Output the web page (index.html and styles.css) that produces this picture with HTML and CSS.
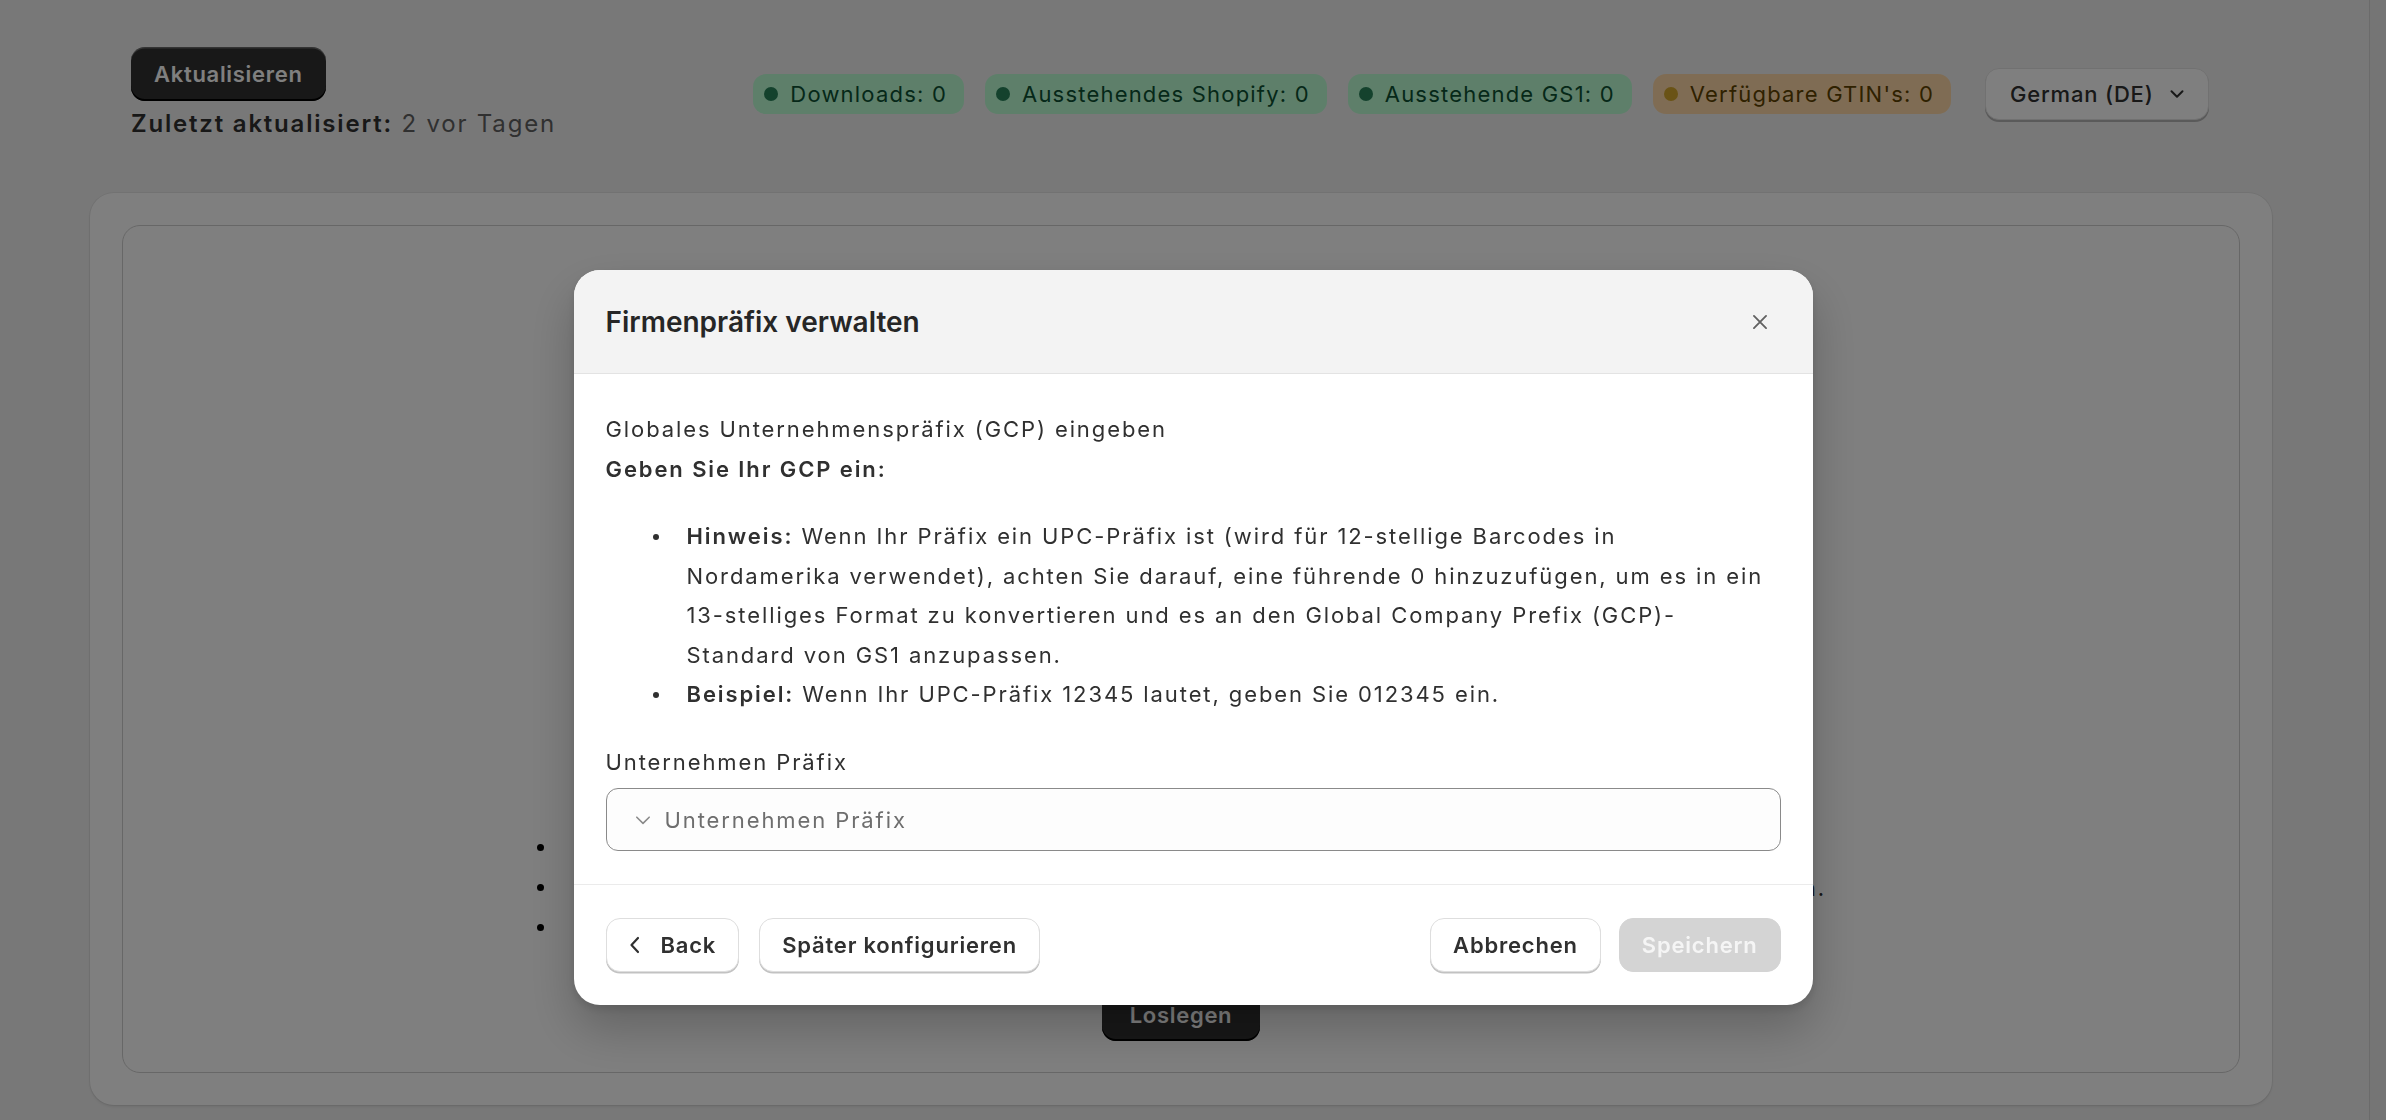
FILE: index.html
```html
<!DOCTYPE html>
<html lang="de">
<head>
<meta charset="utf-8">
<title>Firmenpräfix verwalten</title>
<link rel="stylesheet" href="styles.css">
</head>
<body>
<div class="app">
  <main class="main">
    <header class="topbar">
      <div class="refresh">
        <button class="btn-dark" type="button">Aktualisieren</button>
        <p class="updated"><strong>Zuletzt aktualisiert:</strong> 2 vor Tagen</p>
      </div>
      <div class="status">
        <span class="badge badge-success"><span class="dot"></span>Downloads: 0</span>
        <span class="badge badge-success"><span class="dot"></span>Ausstehendes Shopify: 0</span>
        <span class="badge badge-success"><span class="dot"></span>Ausstehende GS1: 0</span>
        <span class="badge badge-attention"><span class="dot"></span>Verfügbare GTIN's: 0</span>
        <button class="select" type="button">German (DE)
          <svg class="select-chevron" viewBox="0 0 20 20" aria-hidden="true"><path d="M5 7.5l5 5 5-5" fill="none" stroke="currentColor" stroke-width="1.8" stroke-linecap="round" stroke-linejoin="round"/></svg>
        </button>
      </div>
    </header>

    <section class="card">
      <div class="card-inner">
        <ul class="bg-list">
          <li>Verbinden Sie Ihr GS1-Konto.</li>
          <li class="long">Weisen Sie Ihren Produkten GTINs zu und laden Sie die Barcodes herunterladen.</li>
          <li>Synchronisieren Sie die Daten.</li>
        </ul>
        <button class="btn-dark btn-start" type="button">Loslegen</button>
      </div>
    </section>
  </main>
  <div class="scrollbar"></div>
</div>

<div class="backdrop"></div>

<div class="modal-layer">
  <div class="modal" role="dialog" aria-labelledby="modal-title">
    <div class="modal-header">
      <h2 class="modal-title" id="modal-title">Firmenpräfix verwalten</h2>
      <button class="close" type="button" aria-label="Schließen">
        <svg viewBox="0 0 20 20" aria-hidden="true"><path d="M4.5 4.5l11 11M15.5 4.5l-11 11" fill="none" stroke="currentColor" stroke-width="1.7" stroke-linecap="round"/></svg>
      </button>
    </div>
    <div class="modal-body">
      <p>Globales Unternehmenspräfix (GCP) eingeben</p>
      <p><strong>Geben Sie Ihr GCP ein:</strong></p>
      <ul class="hint-list">
        <li><strong>Hinweis:</strong> Wenn Ihr Präfix ein UPC-Präfix ist (wird für 12-stellige Barcodes in Nordamerika verwendet), achten Sie darauf, eine führende 0 hinzuzufügen, um es in ein 13-stelliges Format zu konvertieren und es an den Global Company Prefix (GCP)-Standard von GS1 anzupassen.</li>
        <li><strong>Beispiel:</strong> Wenn Ihr UPC-Präfix 12345 lautet, geben Sie 012345 ein.</li>
      </ul>
      <label class="field-label" for="prefix">Unternehmen Präfix</label>
      <div class="combo">
        <svg class="combo-chevron" viewBox="0 0 16 16" aria-hidden="true"><path d="M2.5 5.5L8 11l5.5-5.5" fill="none" stroke="currentColor" stroke-width="1.4" stroke-linecap="round" stroke-linejoin="round"/></svg>
        <input id="prefix" class="combo-input" type="text" placeholder="Unternehmen Präfix">
      </div>
    </div>
    <div class="modal-footer">
      <div class="btn-group">
        <button class="btn" type="button">
          <svg class="back-chevron" viewBox="0 0 12 20" aria-hidden="true"><path d="M9 3L2.5 10 9 17" fill="none" stroke="currentColor" stroke-width="2.2" stroke-linecap="round" stroke-linejoin="round"/></svg>
          Back
        </button>
        <button class="btn" type="button">Später konfigurieren</button>
      </div>
      <div class="btn-group btn-group-right">
        <button class="btn" type="button">Abbrechen</button>
        <button class="btn btn-disabled" type="button" disabled>Speichern</button>
      </div>
    </div>
  </div>
</div>
</body>
</html>
```

FILE: styles.css
```css
* { box-sizing: border-box; }

html, body {
  margin: 0;
  height: 100%;
}

body {
  font-family: Inter, "Liberation Sans", sans-serif;
  color: #303030;
  background: #f1f1f1;
  overflow: hidden;
}

.app {
  display: flex;
  height: 1120px;
}

.main {
  flex: 1;
  min-width: 0;
}

.scrollbar {
  width: 17px;
  background: #ebebeb;
  border-left: 1px solid #d6d6d6;
}

/* top bar */
.topbar {
  display: flex;
  justify-content: space-between;
  align-items: flex-start;
  padding: 47px 160px 0 131px;
}

.btn-dark {
  font-family: inherit;
  font-size: 22px;
  font-weight: 600;
  letter-spacing: 0.7px;
  color: #fff;
  background: #303030;
  border: 0;
  border-radius: 14px;
  height: 54px;
  padding: 0 23px;
  box-shadow: inset 0 -2px 0 #000, inset 0 1.5px 0 rgba(255, 255, 255, 0.28);
}

.updated {
  margin: 4px 0 0;
  font-size: 24px;
  letter-spacing: 1.8px;
  line-height: 38px;
  color: #616161;
}

.updated strong {
  color: #303030;
  font-weight: 600;
}

.status {
  display: flex;
  align-items: center;
  gap: 21px;
  margin-top: 21px;
}

.badge {
  display: flex;
  align-items: center;
  gap: 12px;
  height: 40px;
  padding: 0 17px 0 11px;
  border-radius: 13px;
  font-size: 22px;
  letter-spacing: 1.2px;
  white-space: nowrap;
}

.dot {
  width: 14px;
  height: 14px;
  border-radius: 50%;
}

.badge-success {
  background: #bcfed5;
  color: #0c5132;
}

.badge-success .dot { background: #29845a; }

.badge-attention {
  background: #ffd9a8;
  color: #5e4200;
}

.badge-attention .dot { background: #d4a72c; }

.select {
  margin-left: 13px;
  width: 224px;
  height: 52px;
  padding: 0 20px 0 24px;
  display: flex;
  align-items: center;
  justify-content: space-between;
  font-family: inherit;
  font-size: 22px;
  font-weight: 500;
  letter-spacing: 0.8px;
  color: #303030;
  background: #fff;
  border: 1px solid #e3e3e3;
  border-radius: 14px;
  box-shadow: 0 2px 0 #b5b5b5;
}

.select-chevron {
  width: 22px;
  height: 22px;
}

/* background card */
.card {
  margin: 50px 97px 0 90px;
  padding: 32px;
  background: #fff;
  border-radius: 24px;
  box-shadow: 0 0 0 1px rgba(0, 0, 0, 0.05), 0 2px 3px rgba(0, 0, 0, 0.08);
}

.card-inner {
  height: 848px;
  border: 1px solid #cfcfcf;
  border-radius: 18px;
  display: flex;
  flex-direction: column;
  align-items: center;
  justify-content: flex-end;
  padding-bottom: 31px;
}

.bg-list {
  list-style: none;
  margin: 0 0 41px;
  padding: 0 0 0 41px;
  width: 1290px;
  font-size: 22px;
  letter-spacing: 1.9px;
  line-height: 40px;
  color: #303030;
  white-space: nowrap;
}

.bg-list li { position: relative; }

.bg-list li::before {
  content: "";
  position: absolute;
  left: -40px;
  top: 16px;
  width: 7px;
  height: 7px;
  border-radius: 50%;
  background: #000;
}

.bg-list li.long { text-align: right; }

.btn-start {
  height: 52px;
  min-width: 152px;
  padding: 0 28px;
}

/* overlay */
.backdrop {
  position: fixed;
  inset: 0;
  background: rgba(0, 0, 0, 0.5);
}

.modal-layer {
  position: fixed;
  inset: 0;
  display: flex;
  justify-content: center;
  align-items: flex-start;
  padding-top: 270px;
}

.modal {
  width: 1239px;
  background: #fff;
  border-radius: 26px;
  overflow: hidden;
  box-shadow: 0 24px 48px rgba(0, 0, 0, 0.22), 0 4px 10px rgba(0, 0, 0, 0.12);
}

.modal-header {
  height: 104px;
  display: flex;
  align-items: center;
  justify-content: space-between;
  padding: 0 42px 0 32px;
  background: #f3f3f3;
  border-bottom: 1px solid #e3e3e3;
}

.modal-title {
  margin: 0;
  font-size: 28px;
  font-weight: 600;
  color: #262626;
}

.close {
  width: 22px;
  height: 22px;
  padding: 0;
  border: 0;
  background: none;
  color: #616161;
}

.close svg {
  width: 22px;
  height: 22px;
  display: block;
}

.modal-body {
  padding: 35px 32px 33px;
  font-size: 22px;
  letter-spacing: 1.9px;
  line-height: 40px;
  color: #303030;
}

.modal-body p { margin: 0; }

.modal-body strong { font-weight: 600; }

.hint-list {
  list-style: none;
  margin: 28px 0 0;
  padding: 0 5px 0 81px;
  line-height: 39.5px;
}

.hint-list li { position: relative; }

.hint-list li::before {
  content: "";
  position: absolute;
  left: -34px;
  top: 17px;
  width: 6px;
  height: 6px;
  border-radius: 50%;
  background: #303030;
}

.field-label {
  display: block;
  margin-top: 27.5px;
  line-height: 40px;
}

.combo {
  margin-top: 6px;
  height: 63px;
  display: flex;
  align-items: center;
  gap: 13px;
  padding: 0 27px;
  background: #fdfdfd;
  border: 1px solid #8a8a8a;
  border-radius: 12px;
  color: #8a8a8a;
}

.combo-chevron {
  width: 18px;
  height: 18px;
  flex: none;
}

.combo-input {
  flex: 1;
  border: 0;
  outline: 0;
  background: transparent;
  font-family: inherit;
  font-size: 22px;
  letter-spacing: 1.9px;
  color: #303030;
  padding: 0;
}

.combo-input::placeholder { color: #6e6e6e; }

.modal-footer {
  border-top: 1px solid #ebebeb;
  padding: 33px 32px;
  display: flex;
  justify-content: space-between;
}

.btn-group {
  display: flex;
  gap: 20px;
}

.btn-group-right { gap: 18px; }

.btn {
  height: 54px;
  padding: 0 22px;
  display: flex;
  align-items: center;
  gap: 20px;
  font-family: inherit;
  font-size: 22px;
  font-weight: 600;
  letter-spacing: 0.8px;
  color: #303030;
  background: #fff;
  border: 1px solid #dedede;
  border-radius: 14px;
  box-shadow: 0 1.5px 0 #c2c2c2;
}

.back-chevron {
  width: 12px;
  height: 20px;
}

.btn-disabled {
  background: #d4d4d4;
  color: #f5f5f5;
  border-color: #d4d4d4;
  box-shadow: none;
}
```
